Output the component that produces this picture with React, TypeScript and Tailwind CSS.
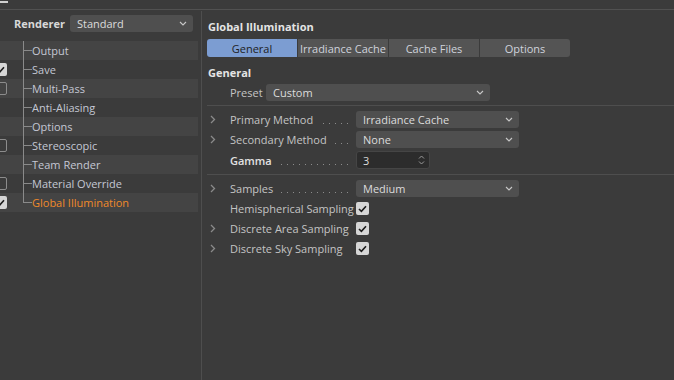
import React from "react"

const font = { fontFamily: '"Open Sans", "Noto Sans", sans-serif' }

function Chevron() {
  return (
    <svg width="8" height="5" viewBox="0 0 8 5" className="text-[#c8c8c8]">
      <path d="M1 1l3 3 3-3" fill="none" stroke="currentColor" strokeWidth="1.1" />
    </svg>
  )
}

function Dropdown({ value, className }: { value: string; className: string }) {
  return (
    <div className={`flex items-center justify-between rounded-[3px] bg-[#4f4f4f] pl-[7px] pr-[6px] text-[#dcdcdc] ${className}`}>
      <span>{value}</span>
      <Chevron />
    </div>
  )
}

function Check({ checked }: { checked: boolean }) {
  if (!checked) {
    return <div className="h-[13px] w-[13px] rounded-[2px] border border-[#8c8c8c]" />
  }
  return (
    <div className="flex h-[13px] w-[13px] items-center justify-center rounded-[2px] bg-[#d6d6d6]">
      <svg width="9" height="8" viewBox="0 0 9 8">
        <path d="M1 4l2.4 2.4L8 1.2" fill="none" stroke="#1c1c1c" strokeWidth="1.6" />
      </svg>
    </div>
  )
}

function Arrow({ show }: { show: boolean }) {
  return (
    <div className="flex w-[23px] flex-none items-center pl-[3px]">
      {show && (
        <svg width="6" height="9" viewBox="0 0 6 9">
          <path d="M1 1l3.5 3.5L1 8" fill="none" stroke="#8a8a8a" strokeWidth="1.3" />
        </svg>
      )}
    </div>
  )
}

// dotted leader between label and control, aligned to the right
function Label({ text, bold }: { text: string; bold?: boolean }) {
  return (
    <div className="flex w-[126px] flex-none items-center">
      <span className={`whitespace-nowrap ${bold ? "font-semibold text-[#e2e2e2]" : "text-[#c4c4c4]"}`}>{text}</span>
      <div className="ml-[5px] mr-[8px] mt-[8px] h-px flex-1 bg-[repeating-linear-gradient(to_left,#8c8c8c_0_1px,transparent_1px_6px)]" />
    </div>
  )
}

const tree = [
  { name: "Output", box: null },
  { name: "Save", box: true },
  { name: "Multi-Pass", box: false },
  { name: "Anti-Aliasing", box: null },
  { name: "Options", box: null },
  { name: "Stereoscopic", box: false },
  { name: "Team Render", box: null },
  { name: "Material Override", box: false },
  { name: "Global Illumination", box: true },
]

export default function App() {
  return (
    <div className="h-[380px] w-[674px] overflow-hidden bg-[#3b3b3b] text-[11px] leading-[15px]" style={font}>
      <div className="h-[10px] border-b border-[#515151] pt-[1px]">
        <div className="h-[2px] w-[8px] bg-[#cfcfcf]" />
      </div>
      <div className="flex h-[370px]">
        {/* left tree */}
        <div className="w-[201px] flex-none overflow-hidden">
          <div className="flex h-[31px] items-start pl-[14px] pt-[5px]">
            <span className="mr-[5px] mt-[1px] font-bold text-[#d8d8d8]">Renderer</span>
            <Dropdown value="Standard" className="h-[17px] w-[123px]" />
          </div>
          <div className="w-[198px]">
            {tree.map((t, i) => {
              const last = i === tree.length - 1
              const sel = t.name === "Global Illumination"
              return (
                <div key={t.name} className={`flex h-[19px] items-center ${i % 2 === 0 ? "bg-[#444444]" : ""}`}>
                  <div className="flex w-[23px] flex-none items-center">
                    {t.box !== null && (
                      <div className="-ml-[6px]">
                        <Check checked={t.box} />
                      </div>
                    )}
                  </div>
                  <div className="flex h-full w-[9px] flex-none flex-col">
                    <div className="h-[10px] border-b border-l border-[#8a8a8a]" />
                    <div className={`flex-1 ${last ? "" : "border-l border-[#8a8a8a]"}`} />
                  </div>
                  <span className={sel ? "text-[#f08a2a]" : "text-[#c4c8d4]"}>{t.name}</span>
                </div>
              )
            })}
          </div>
        </div>
        <div className="mt-[1px] w-px bg-[#4e4e4e]" />
        {/* right panel */}
        <div className="flex-1 pl-[5px] pt-[9px]">
          <div className="h-[15px] pl-[1px] font-bold text-[#e4e4e4]">Global Illumination</div>
          <div className="mt-[5px] flex h-[18px] w-[363px] overflow-hidden rounded-[3px]">
            <div className="flex flex-1 items-center justify-center bg-[#7c9dd2] text-[#1e1e1e]">General</div>
            <div className="ml-px flex flex-1 items-center justify-center bg-[#545454] text-[#cfd3dc]">Irradiance Cache</div>
            <div className="ml-px flex flex-1 items-center justify-center bg-[#545454] text-[#cfd3dc]">Cache Files</div>
            <div className="ml-px flex flex-1 items-center justify-center bg-[#545454] text-[#cfd3dc]">Options</div>
          </div>
          <div className="mt-[8px] h-[14px] pl-[1px] font-bold text-[#e4e4e4]">General</div>
          <div className="mt-[5px] flex h-[17px] items-center pl-[23px]">
            <span className="w-[36px] text-[#c4c4c4]">Preset</span>
            <Dropdown value="Custom" className="h-[17px] w-[224px]" />
          </div>
          <div className="mt-[4px] h-px bg-[#4e4e4e]" />
          <div className="mt-[5px] flex h-[17px]">
            <Arrow show />
            <Label text="Primary Method" />
            <Dropdown value="Irradiance Cache" className="h-[17px] w-[163px]" />
          </div>
          <div className="mt-[3px] flex h-[17px]">
            <Arrow show />
            <Label text="Secondary Method" />
            <Dropdown value="None" className="h-[17px] w-[163px]" />
          </div>
          <div className="mt-[3px] flex h-[18px]">
            <Arrow show={false} />
            <Label text="Gamma" bold />
            <div className="flex h-[18px] w-[74px] items-center justify-between rounded-[3px] border border-[#454545] bg-[#2c2c2c] pl-[6px] pr-[4px] text-[#dcdcdc]">
              <span>3</span>
              <svg width="7" height="12" viewBox="0 0 7 12">
                <path d="M1 4.5l2.5-2.5 2.5 2.5M1 7.5l2.5 2.5 2.5-2.5" fill="none" stroke="#9a9a9a" strokeWidth="1" />
              </svg>
            </div>
          </div>
          <div className="mt-[5px] h-px bg-[#4e4e4e]" />
          <div className="mt-[5px] flex h-[17px]">
            <Arrow show />
            <Label text="Samples" />
            <Dropdown value="Medium" className="h-[17px] w-[163px]" />
          </div>
          {[
            { t: "Hemispherical Sampling", a: false, m: "mt-[5px]" },
            { t: "Discrete Area Sampling", a: true, m: "mt-[7px]" },
            { t: "Discrete Sky Sampling", a: true, m: "mt-[7px]" },
          ].map((r) => (
            <div key={r.t} className={`flex h-[13px] items-center ${r.m}`}>
              <Arrow show={r.a} />
              <span className="mr-[2px] min-w-[124px] whitespace-nowrap text-[#c4c4c4]">{r.t}</span>
              <Check checked />
            </div>
          ))}
        </div>
      </div>
    </div>
  )
}
